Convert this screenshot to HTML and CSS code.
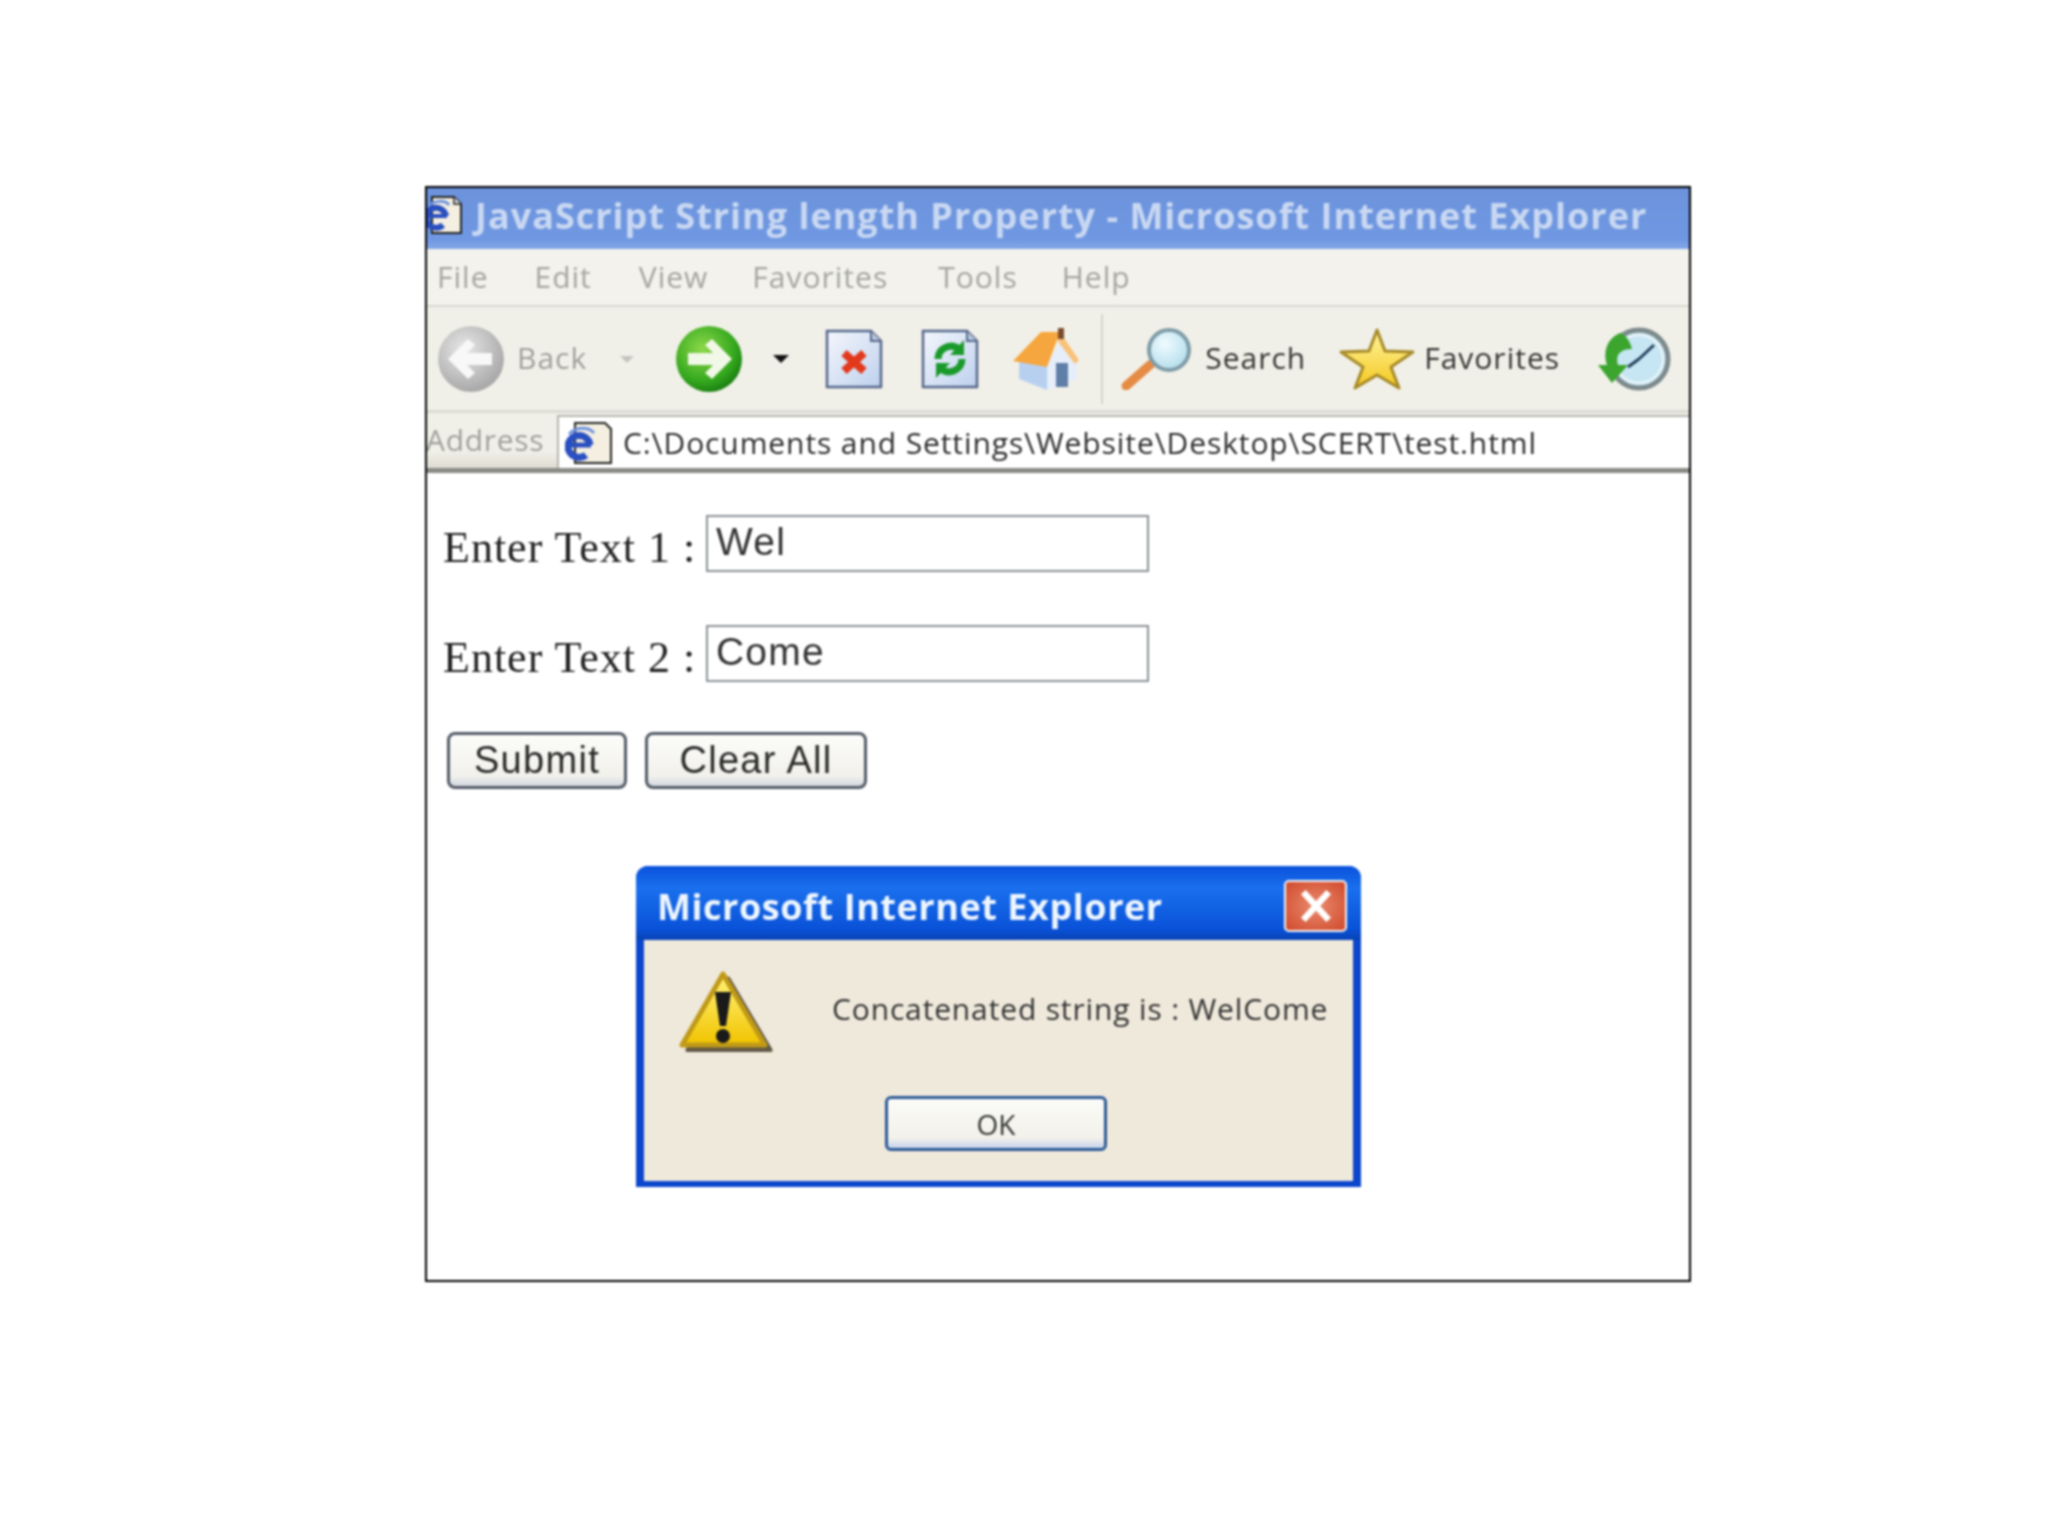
FILE: index.html
```html
<!DOCTYPE html>
<html lang="en">
<head>
<meta charset="utf-8">
<title>JavaScript String length Property</title>
<link rel="stylesheet" href="styles.css">
</head>
<body>
<div class="window">
  <div class="titlebar">
    <svg class="title-icon" viewBox="0 0 38 40"><path d="M7 3h22l7 7v29H7z" fill="#f4efe0" stroke="#222" stroke-width="2"/><path d="M29 3v7h7" fill="#ddd" stroke="#222" stroke-width="1.5"/><path d="M21 22a10 10 0 1 0-3 9" fill="none" stroke="#2a4fc0" stroke-width="6"/><path d="M3 22h19" stroke="#2a4fc0" stroke-width="4"/><path d="M3 12C10 6 20 6 24 11" fill="none" stroke="#6f93e0" stroke-width="3"/></svg>
    <span class="title-text">JavaScript String length Property - Microsoft Internet Explorer</span>
  </div>
  <div class="menubar">
    <span class="menu-file">File</span><span class="menu-edit">Edit</span><span class="menu-view">View</span><span class="menu-fav">Favorites</span><span class="menu-tools">Tools</span><span class="menu-help">Help</span>
  </div>
  <div class="toolbar">
    <svg class="ic ic-round" viewBox="0 0 68 68"><defs><radialGradient id="gb" cx=".4" cy=".35" r=".7"><stop offset="0" stop-color="#e8e8e8"/><stop offset="1" stop-color="#a4a4a4"/></radialGradient><radialGradient id="gf" cx=".4" cy=".35" r=".7"><stop offset="0" stop-color="#8ed84a"/><stop offset=".7" stop-color="#34a81e"/><stop offset="1" stop-color="#17780f"/></radialGradient><linearGradient id="gd" x1="0" y1="0" x2="1" y2="1"><stop offset="0" stop-color="#f4f7fc"/><stop offset="1" stop-color="#bed0ee"/></linearGradient><linearGradient id="gs" x1="0" y1="0" x2="0" y2="1"><stop offset="0" stop-color="#fff4a0"/><stop offset="1" stop-color="#f4c81e"/></linearGradient></defs><circle cx="34" cy="34" r="33" fill="url(#gb)"/><path d="M11 34 31 14l7 6-8 8h25v12H30l8 8-7 6z" fill="#f8f8f8"/></svg>
    <span class="label label-back">Back</span>
    <svg class="caret caret-back" viewBox="0 0 16 8"><path d="M1 1h14L8 8z" fill="#c4c4c0"/></svg>
    <svg class="ic ic-round ic-forward" viewBox="0 0 68 68"><circle cx="34" cy="34" r="33" fill="url(#gf)"/><path d="M57 34 37 14l-7 6 8 8H13v12h25l-8 8 7 6z" fill="#f2f8e8"/></svg>
    <svg class="caret caret-forward" viewBox="0 0 16 8"><path d="M0 0h16L8 8z" fill="#111"/></svg>
    <svg class="ic ic-doc ic-stop" viewBox="0 0 58 60"><path d="M2 2h44l10 10v46H2z" fill="url(#gd)" stroke="#56688c" stroke-width="2.5"/><path d="M46 2v10h10" fill="#b8c6de" stroke="#56688c" stroke-width="2"/><path d="M19 24l20 18M39 24 19 42" stroke="#e2391c" stroke-width="8"/></svg>
    <svg class="ic ic-doc ic-refresh" viewBox="0 0 58 60"><path d="M2 2h44l10 10v46H2z" fill="url(#gd)" stroke="#56688c" stroke-width="2.5"/><path d="M46 2v10h10" fill="#b8c6de" stroke="#56688c" stroke-width="2"/><path d="M17 30a13 13 0 0 1 21-10M41 30a13 13 0 0 1-21 10" fill="none" stroke="#1b9a2c" stroke-width="7"/><path d="M43 11v15H29zM15 49V34h14z" fill="#1b9a2c"/></svg>
    <svg class="ic ic-home" viewBox="0 0 70 64"><path d="M8 32v20l28 11V38z" fill="#b8d0f0"/><path d="M36 63V38L50 14l16 22v16z" fill="#e6eefa"/><path d="M2 34 30 5h19L36 40z" fill="#f6a63e"/><path d="M49 5 68 33l-4 4L46 13z" fill="#f9c27a"/><rect x="47" y="1" width="6" height="11" fill="#7b4a2c"/><rect x="45" y="36" width="12" height="24" fill="#5f7ea8"/></svg>
    <span class="separator"></span>
    <svg class="ic ic-search" viewBox="0 0 74 62"><defs><radialGradient id="gl" cx=".4" cy=".35" r=".8"><stop offset="0" stop-color="#f0fbff"/><stop offset="1" stop-color="#a8d8e8"/></radialGradient></defs><path d="M5 58 30 36" stroke="#e58b45" stroke-width="9" stroke-linecap="round"/><circle cx="48" cy="22" r="20" fill="url(#gl)" stroke="#7f9ca8" stroke-width="4"/></svg>
    <span class="label label-search">Search</span>
    <svg class="ic ic-star" viewBox="0 0 76 62"><path d="M38 2 46 23 74 24 52 39 60 60 38 47 16 60 24 39 2 24 30 23z" fill="url(#gs)" stroke="#a68a28" stroke-width="3" stroke-linejoin="round"/></svg>
    <span class="label label-fav">Favorites</span>
    <svg class="ic ic-history" viewBox="0 0 74 68"><circle cx="41" cy="34" r="29" fill="#c6e6f4" stroke="#7d8a8c" stroke-width="5"/><circle cx="41" cy="34" r="24" fill="none" stroke="#eef6f8" stroke-width="2"/><path d="M41 34 56 20M41 34 30 42" stroke="#26405c" stroke-width="3"/><path d="M22 8C8 14 5 28 9 40L0 40 14 58 30 40 20 40C17 30 22 24 34 24 32 16 28 10 22 8z" fill="#3ba52e"/></svg>
  </div>
  <div class="addressbar">
    <span class="address-label">Address</span>
    <div class="address-field">
      <svg class="address-icon" viewBox="0 0 48 44"><path d="M10 2h30l6 6v34H10z" fill="#f4efe0" stroke="#222" stroke-width="2"/><path d="M25 24a11 11 0 1 0-4 10" fill="none" stroke="#2a4fc0" stroke-width="7"/><path d="M3 24h23" stroke="#2a4fc0" stroke-width="5"/><path d="M4 13C12 5 24 6 29 12" fill="none" stroke="#6f93e0" stroke-width="3"/></svg>
      <span class="address-url">C:\Documents and Settings\Website\Desktop\SCERT\test.html</span>
    </div>
  </div>
  <div class="page">
    <div class="row"><span class="field-label">Enter Text 1 :</span><span class="input">Wel</span></div>
    <div class="row row-second"><span class="field-label">Enter Text 2 :</span><span class="input">Come</span></div>
    <div class="buttons"><span class="btn btn-submit">Submit</span><span class="btn btn-clear">Clear All</span></div>
  </div>
  <div class="dialog">
    <div class="dialog-title"><span>Microsoft Internet Explorer</span><span class="close"><svg viewBox="0 0 30 30"><path d="M5 4 25 26M25 4 5 26" stroke="#fff" stroke-width="5"/></svg></span></div>
    <div class="dialog-body">
      <div class="dialog-message">
        <svg class="warn" viewBox="0 0 96 82"><defs><linearGradient id="gw" x1="0" y1="0" x2="0" y2="1"><stop offset="0" stop-color="#fff27a"/><stop offset="1" stop-color="#f1c400"/></linearGradient></defs><path d="M8 79 48 8l42 71z" fill="#3e3420" stroke="#3e3420" stroke-width="5" stroke-linejoin="round" opacity=".8" transform="translate(2 1)"/><path d="M4 75 45 4 87 75z" fill="url(#gw)" stroke="#c09a18" stroke-width="5" stroke-linejoin="round"/><path d="M37 22h16l-5 34h-6z" fill="#1a1a1a"/><circle cx="45" cy="66" r="7" fill="#1a1a1a"/></svg>
        <span class="message-text">Concatenated string is : WelCome</span>
      </div>
      <span class="ok">OK</span>
    </div>
  </div>
</div>
</body>
</html>
```

FILE: styles.css
```css
* { box-sizing: border-box; }
html, body { margin: 0; background: #fff; }
body { padding: 186px 0 0 425px; height: 1536px; overflow: hidden; }
.window {
  position: relative;
  width: 1266px;
  height: 1096px;
  border: 2px solid #000;
  background: #fff;
  font-family: "Liberation Sans", Arial, sans-serif;
  filter: blur(0.8px);
  overflow: hidden;
}
.titlebar {
  height: 61px;
  display: flex;
  align-items: center;
  background: linear-gradient(#6c93dc, #7098e2 85%, #85a8e8);
  color: #c9d8f2;
}
.title-icon { width: 38px; height: 40px; margin: -10px 0 0 -2px; flex: none; }
.title-text {
  margin: -6px 0 0 12px;
  font: bold 36px "Open Sans", "Liberation Sans", sans-serif;
  letter-spacing: 1px;
  white-space: nowrap;
}
.menubar {
  height: 58px;
  display: flex;
  align-items: center;
  padding-bottom: 2px;
  background: #f3f2ec;
  border-bottom: 2px solid #d8d7d0;
  color: #a5a5a2;
  font: 30px "Open Sans", sans-serif;
  letter-spacing: 1px;
}
.menubar span { white-space: nowrap; }
.menu-file { margin-left: 10px; }
.menu-edit { margin-left: 46px; }
.menu-view { margin-left: 47px; }
.menu-fav { margin-left: 44px; }
.menu-tools { margin-left: 50px; }
.menu-help { margin-left: 44px; }
.toolbar {
  height: 106px;
  display: flex;
  align-items: center;
  background: #f1f0e8;
  border-bottom: 3px solid #dcdbd4;
  padding-left: 10px;
}
.ic { flex: none; display: block; }
.ic-round { width: 68px; height: 68px; }
.label {
  margin-top: -2px;
  font: 30px "Open Sans", sans-serif;
  letter-spacing: 1px;
  color: #333;
  white-space: nowrap;
}
.label-back { margin-left: 12px; color: #a0a09c; }
.caret { flex: none; width: 16px; height: 8px; }
.caret-back { margin-left: 32px; }
.ic-forward { margin-left: 40px; }
.caret-forward { margin-left: 30px; }
.ic-doc { width: 58px; height: 60px; }
.ic-stop { margin-left: 36px; }
.ic-refresh { margin-left: 38px; }
.ic-home { width: 70px; height: 64px; margin-left: 32px; }
.separator { width: 2px; height: 90px; background: #d4d3cc; margin-left: 20px; flex: none; }
.ic-search { width: 74px; height: 62px; margin-left: 18px; }
.label-search { margin-left: 10px; }
.ic-star { width: 76px; height: 62px; margin-left: 33px; }
.label-fav { margin-left: 9px; }
.ic-history { width: 74px; height: 68px; margin-left: 38px; }
.addressbar {
  height: 60px;
  display: flex;
  align-items: stretch;
  background: linear-gradient(#f1f0e8 70%, #dedcd2);
  border-bottom: 5px solid #8a8a86;
}
.address-label {
  width: 131px;
  margin-left: -1px;
  display: flex;
  align-items: center;
  padding-bottom: 2px;
  font: 30px "Open Sans", sans-serif;
  letter-spacing: 0.7px;
  color: #a0a09c;
  white-space: nowrap;
}
.address-field {
  flex: 1;
  display: flex;
  align-items: center;
  margin-top: 2px;
  background: #fff;
  border-top: 2px solid #b5b4ae;
  border-left: 2px solid #b5b4ae;
}
.address-icon { width: 48px; height: 44px; margin-left: 6px; flex: none; }
.address-url {
  margin-left: 10px;
  font: 30px "Open Sans", sans-serif;
  letter-spacing: 0.9px;
  color: #2c2c2c;
  white-space: nowrap;
}
.page { padding: 42px 0 0 16px; }
.row {
  display: flex;
  height: 57px;
  color: #222;
}
.row-second { margin-top: 53px; }
.field-label {
  width: 263px;
  padding-top: 10px;
  font: 44px/46px "Liberation Serif", "Times New Roman", serif;
  letter-spacing: 1px;
  white-space: nowrap;
}
.input {
  width: 443px;
  height: 57px;
  padding: 2px 8px;
  border: 2px solid #8d9195;
  background: #fff;
  font-size: 39px;
  letter-spacing: 1.2px;
  line-height: 46px;
  color: #333;
}
.buttons { display: flex; gap: 18px; margin: 50px 0 0 4px; }
.btn {
  height: 57px;
  display: flex;
  align-items: center;
  justify-content: center;
  border: 3px solid #545c68;
  border-radius: 8px;
  background: linear-gradient(#fcfcfa, #f2f1ec 80%, #d3d8e0);
  font-size: 38px;
  letter-spacing: 1.3px;
  color: #2a2a2a;
}
.btn-submit { width: 180px; }
.btn-clear { width: 222px; }
.dialog {
  position: absolute;
  left: 209px;
  top: 678px;
  width: 725px;
  height: 321px;
  display: flex;
  flex-direction: column;
  border-radius: 12px 12px 0 0;
  background: #0c46cc;
  overflow: hidden;
}
.dialog-title {
  height: 74px;
  flex: none;
  display: flex;
  align-items: center;
  justify-content: space-between;
  padding: 6px 14px 0 21px;
  background: linear-gradient(#0a52dc, #1a70ee 30%, #0a52d8 85%, #0842b4);
  font: bold 36px "Open Sans", "Liberation Sans", sans-serif;
  letter-spacing: 0.55px;
  color: #eef6ff;
}
.close {
  width: 63px;
  height: 52px;
  display: flex;
  align-items: center;
  justify-content: center;
  border: 2px solid #f2f2f2;
  border-radius: 5px;
  background: radial-gradient(#ea8a6e, #d04a2c);
}
.close svg { width: 38px; height: 38px; }
.dialog-body {
  flex: 1;
  margin: 0 8px 6px;
  display: flex;
  flex-direction: column;
  align-items: center;
  background: #efe9dc;
}
.dialog-message {
  align-self: stretch;
  display: flex;
  align-items: center;
  height: 110px;
  margin-top: 16px;
  padding-left: 34px;
}
.warn { width: 96px; height: 82px; flex: none; }
.message-text {
  margin: -6px 0 0 58px;
  font: 30px "Open Sans", sans-serif;
  letter-spacing: 0.85px;
  color: #333;
  white-space: nowrap;
}
.ok {
  width: 222px;
  height: 55px;
  margin-top: 30px;
  margin-left: -5px;
  display: flex;
  align-items: center;
  justify-content: center;
  border: 3px solid #2c5a96;
  border-radius: 6px;
  background: linear-gradient(#fbfbf8, #f2f1ea 80%, #c7d4ee);
  font: 28px "Open Sans", sans-serif;
  color: #333;
}
```
